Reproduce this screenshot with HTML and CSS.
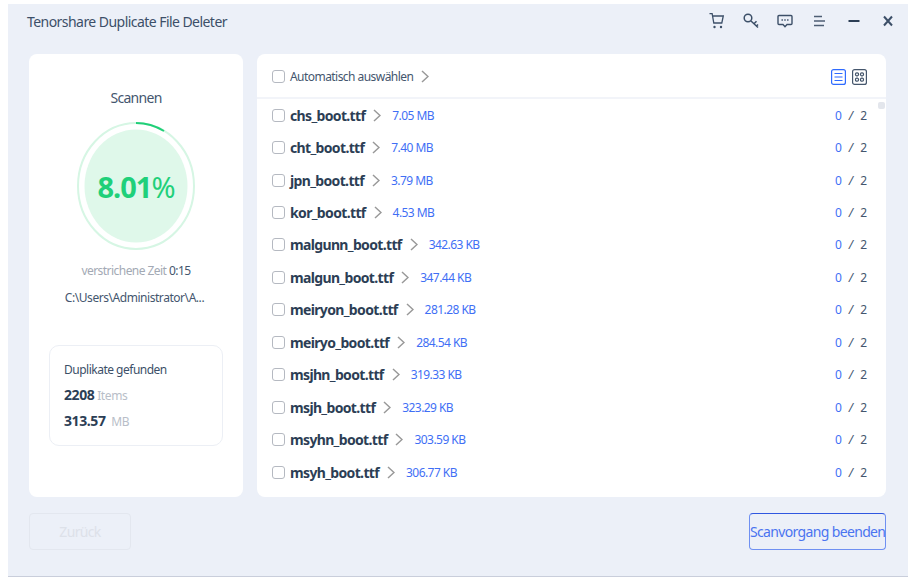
FILE: index.html
```html
<!DOCTYPE html>
<html lang="en">
<head>
  <meta charset="UTF-8">
  <title>Tenorshare Duplicate File Deleter</title>
  <link rel="stylesheet" href="styles.css">
</head>
<body>
  <div class="window">
    <div class="titlebar">
      <div class="app-title">Tenorshare Duplicate File Deleter</div>
      <div class="win-icons">
        <svg width="16" height="16" viewBox="0 0 16 16" fill="none" stroke="#3c4f68" stroke-width="1.3"><path d="M0.5 0.5h2.6l1.7 9.5h8l1.5-7H3.6"/><circle cx="5.5" cy="14" r="1.2" fill="#3c4f68" stroke="none"/><circle cx="12" cy="14" r="1.2" fill="#3c4f68" stroke="none"/></svg>
        <svg width="16" height="16" viewBox="0 0 16 16" fill="none" stroke="#3c4f68" stroke-width="1.5"><circle cx="5" cy="5" r="3.8"/><path d="M8 8l7 6.5M11 10.8l2.5-2.5M13.5 13l1.5-1.6"/></svg>
        <svg width="16" height="16" viewBox="0 0 16 16" fill="none" stroke="#3c4f68" stroke-width="1.4"><path d="M2 2.5h12a1 1 0 0 1 1 1v7a1 1 0 0 1-1 1h-4l-2 2.2-2-2.2H2a1 1 0 0 1-1-1v-7a1 1 0 0 1 1-1z"/><path d="M4.5 7h1.4M7.3 7h1.4M10.1 7h1.4" stroke-width="1.5"/></svg>
        <svg width="16" height="16" viewBox="0 0 16 16" fill="none" stroke="#4d5e74" stroke-width="1.6"><path d="M3 3.5h8M3 8h11M3 12.5h10"/></svg>
        <svg width="16" height="16" viewBox="0 0 16 16" fill="none" stroke="#2c3e55" stroke-width="2"><path d="M2.5 8h11"/></svg>
        <svg width="16" height="16" viewBox="0 0 16 16" fill="none" stroke="#3c4f68" stroke-width="2"><path d="M4 3.5l8 9M12 3.5l-8 9"/></svg>
      </div>
    </div>

    <div class="content">
      <div class="side-panel">
        <div class="scan-title">Scannen</div>
        <svg class="ring" width="120" height="130" viewBox="0 0 120 130">
          <ellipse cx="60" cy="65" rx="58" ry="63" fill="none" stroke="#d6f6e4" stroke-width="2"/>
          <ellipse cx="60" cy="65" rx="51.5" ry="56.5" fill="#dff8ea"/>
          <path d="M60 2A58 63 0 0 1 88 10" fill="none" stroke="#20cf78" stroke-width="2"/>
        </svg>
        <div class="percent">8.01<span class="percent-sign">%</span></div>
        <div class="elapsed">verstrichene Zeit <span class="elapsed-time">0:15</span></div>
        <div class="scan-path">C:\Users\Administrator\A...</div>
        <div class="found-box">
          <div class="found-title">Duplikate gefunden</div>
          <div class="found-row"><b>2208</b> <span>Items</span></div>
          <div class="found-row"><b>313.57</b> <span class="unit-mb">MB</span></div>
        </div>
      </div>

      <div class="list-panel">
        <div class="list-header">
          <span class="checkbox"></span>
          <span class="auto-label">Automatisch auswählen</span>
          <svg class="chevron" width="8" height="13" viewBox="0 0 8 13" fill="none" stroke="#999" stroke-width="1.5"><path d="M1 1l6 5.5L1 12"/></svg>
          <div class="view-icons">
            <svg width="15" height="16" viewBox="0 0 15 16" fill="none" stroke="#2f6bff" stroke-width="1.2"><rect x="0.6" y="0.6" width="13.8" height="14.8" rx="2"/><path d="M3.5 4.5h8M3.5 8h8M3.5 11.5h8"/></svg>
            <svg width="15" height="16" viewBox="0 0 15 16" fill="none" stroke="#45566c" stroke-width="1.2"><rect x="0.6" y="0.6" width="13.8" height="14.8" rx="2"/><rect x="3.5" y="3.8" width="3" height="3" rx="1.2"/><rect x="8.5" y="3.8" width="3" height="3" rx="1.2"/><rect x="3.5" y="9.2" width="3" height="3" rx="1.2"/><rect x="8.5" y="9.2" width="3" height="3" rx="1.2"/></svg>
          </div>
        </div>
        <div class="file-list" id="fileList"></div>
        <div class="scroll-thumb"></div>
      </div>
    </div>

    <div class="footer">
      <button class="btn-back">Zurück</button>
      <button class="btn-stop">Scanvorgang beenden</button>
    </div>
  </div>

  <script>
    const files = [
      ["chs_boot.ttf", "7.05 MB"],
      ["cht_boot.ttf", "7.40 MB"],
      ["jpn_boot.ttf", "3.79 MB"],
      ["kor_boot.ttf", "4.53 MB"],
      ["malgunn_boot.ttf", "342.63 KB"],
      ["malgun_boot.ttf", "347.44 KB"],
      ["meiryon_boot.ttf", "281.28 KB"],
      ["meiryo_boot.ttf", "284.54 KB"],
      ["msjhn_boot.ttf", "319.33 KB"],
      ["msjh_boot.ttf", "323.29 KB"],
      ["msyhn_boot.ttf", "303.59 KB"],
      ["msyh_boot.ttf", "306.77 KB"]
    ];

    const fileList = document.getElementById("fileList");
    files.forEach(file => {
      const row = document.createElement("div");
      row.className = "file-row";
      row.innerHTML = `
        <span class="checkbox"></span>
        <span class="file-name">${file[0]}</span>
        <svg class="chevron" width="8" height="13" viewBox="0 0 8 13" fill="none" stroke="#999" stroke-width="1.5"><path d="M1 1l6 5.5L1 12"/></svg>
        <span class="file-size">${file[1]}</span>
        <span class="file-count"><em>0</em><i>/</i>2</span>
      `;
      fileList.appendChild(row);
    });
  </script>
</body>
</html>
```

FILE: styles.css
```css
body {
  margin: 0;
  background-color: #fff;
  font-family: "Noto Sans", Arial, sans-serif;
  color: #2c3e55;
}

.window {
  width: 900px;
  height: 573px;
  margin: 4px 0 0 8px;
  background-color: #ecf0f8;
  border-bottom: 1px solid #c9cedb;
  box-sizing: border-box;
  padding: 0 22px 0 21px;
  display: flex;
  flex-direction: column;
}

.titlebar {
  height: 50px;
  margin-left: -2px;
  display: flex;
  align-items: center;
  justify-content: space-between;
  padding-bottom: 15px;
  box-sizing: border-box;
}

.app-title {
  font-size: 14px;
  letter-spacing: -0.55px;
  color: #3c4f68;
}

.win-icons {
  display: flex;
  gap: 18.3px;
  margin-right: -10px;
  margin-bottom: 2px;
}

.content {
  display: flex;
  gap: 14px;
  height: 443px;
}

.side-panel {
  width: 214px;
  background-color: #fff;
  border-radius: 8px;
  display: flex;
  flex-direction: column;
  align-items: center;
  position: relative;
}

.scan-title {
  margin-top: 34px;
  font-size: 14px;
  line-height: 20px;
  letter-spacing: -0.7px;
  color: #44566e;
}

.ring {
  margin-top: 13px;
}

.percent {
  position: absolute;
  top: 113px;
  width: 100%;
  text-align: center;
  font-size: 29px;
  font-weight: 700;
  line-height: 40px;
  letter-spacing: -1px;
  color: #1fd07a;
}

.percent-sign {
  font-weight: 400;
}

.elapsed {
  margin-top: 12px;
  font-size: 12px;
  line-height: 16px;
  letter-spacing: -0.55px;
  color: #a3a9b4;
}

.elapsed-time {
  color: #44566e;
}

.scan-path {
  margin: 11px 3px 0 0;
  font-size: 12px;
  line-height: 16px;
  letter-spacing: -0.45px;
  color: #44566e;
}

.found-box {
  margin-top: 39px;
  width: 174px;
  height: 101px;
  box-sizing: border-box;
  border: 1px solid #eceff5;
  border-radius: 10px;
  padding: 15px 14px;
}

.found-title {
  font-size: 12px;
  line-height: 18px;
  letter-spacing: -0.5px;
  color: #3c4f68;
}

.found-row {
  margin-top: 7px;
  line-height: 18px;
  font-size: 12px;
  letter-spacing: -0.4px;
  color: #b8bec8;
}

.found-row b {
  font-size: 14px;
  color: #2c3e55;
}

.unit-mb {
  margin-left: 3px;
}

.list-panel {
  flex: 1;
  background-color: #fff;
  border-radius: 8px;
  position: relative;
  overflow: hidden;
}

.list-header {
  height: 41px;
  padding: 2px 19px 0 15px;
  display: flex;
  align-items: center;
  border-bottom: 2px solid #f2f4f9;
}

.auto-label {
  margin-left: 5px;
  font-size: 12px;
  letter-spacing: -0.55px;
  color: #44566e;
}

.list-header .chevron {
  margin-left: 8px;
}

.view-icons {
  margin-left: auto;
  display: flex;
  gap: 6px;
}

.checkbox {
  width: 11px;
  height: 11px;
  border: 1px solid #b5b9c1;
  border-radius: 3px;
  flex-shrink: 0;
}

.file-row {
  height: 32.45px;
  padding: 0 19px 0 15px;
  display: flex;
  align-items: center;
}

.file-name {
  margin-left: 5px;
  font-size: 14px;
  font-weight: 700;
  letter-spacing: -0.65px;
  color: #2c3e55;
}

.file-row .chevron {
  margin-left: 8px;
}

.file-size {
  margin-left: 11px;
  font-size: 12px;
  letter-spacing: -0.55px;
  color: #3f6ff5;
}

.file-count {
  margin-left: auto;
  font-size: 12px;
  color: #44566e;
}

.file-count em {
  font-style: normal;
  color: #3f6ff5;
}

.file-count i {
  margin: 0 7px;
}

.scroll-thumb {
  position: absolute;
  top: 48px;
  right: 1px;
  width: 7px;
  height: 7px;
  border-radius: 2px;
  background-color: #e3e6ec;
}

.footer {
  display: flex;
  justify-content: space-between;
  align-items: center;
  margin-top: 16px;
}

.footer button {
  height: 37px;
  border-radius: 4px;
  font-family: inherit;
  font-size: 14px;
  letter-spacing: -0.65px;
  white-space: nowrap;
  background: transparent;
  padding: 0;
}

.btn-back {
  width: 102px;
  border: 1px solid #e3e7ef;
  color: #dde1e9;
}

.btn-stop {
  width: 137px;
  border: 1px solid #6f90f2;
  border-top-color: #2f57e0;
  color: #4a74f0;
}
```
